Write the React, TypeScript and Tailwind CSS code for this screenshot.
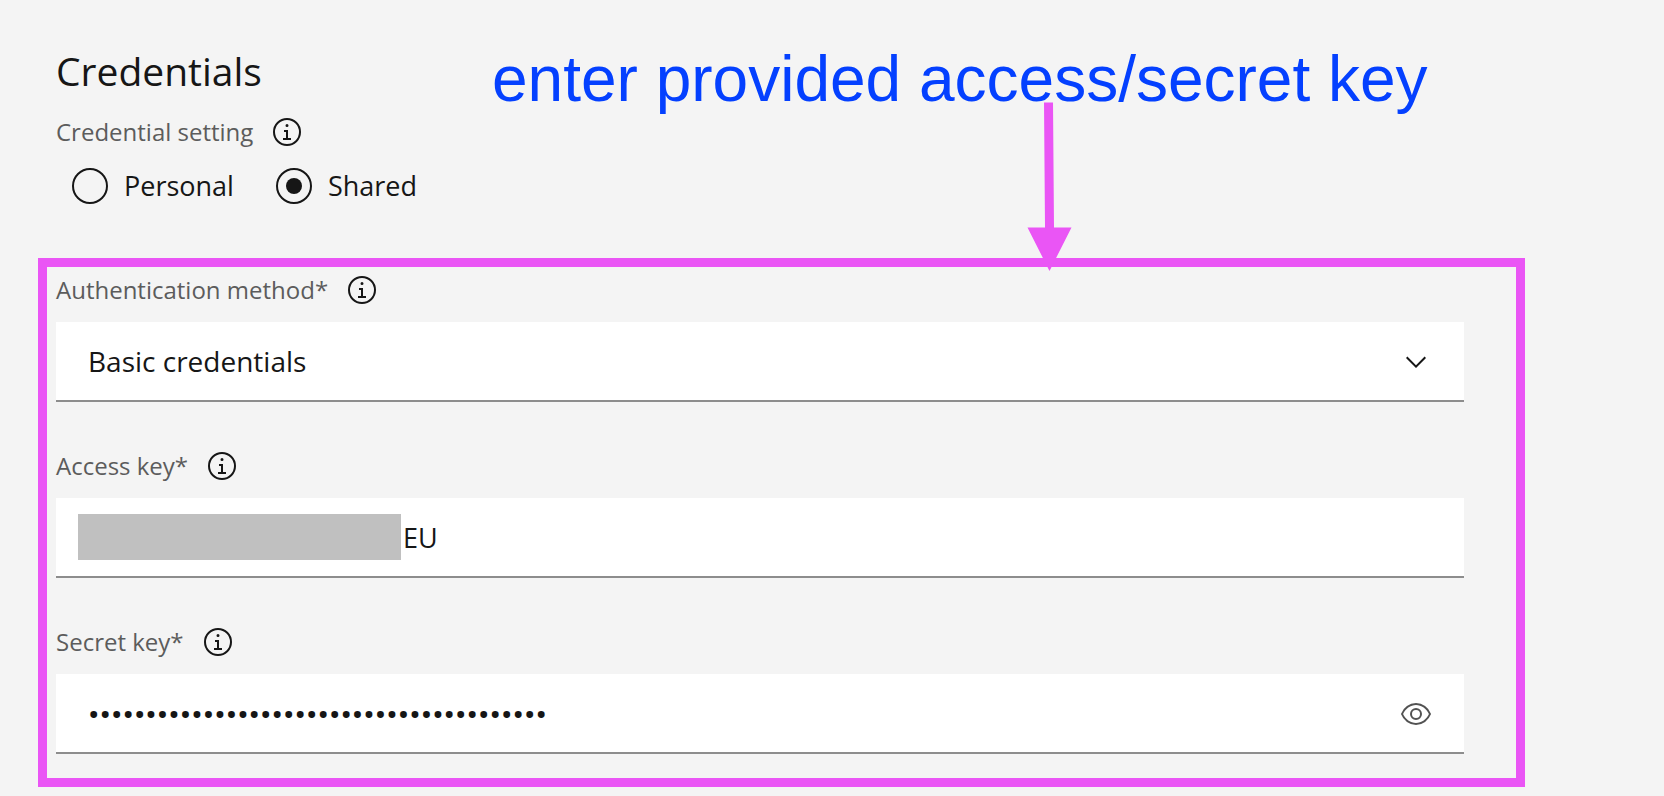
import React, { useState } from "react";

function InfoButton({ label }: { label: string }) {
  return (
    <button type="button" aria-label={label} className="size-8 shrink-0 text-[#161616]">
      <svg viewBox="0 0 32 32" className="size-8" fill="currentColor" aria-hidden="true">
        <path d="M17 22V14H13v2h2v6H12v2h8V22zM16 8a1.5 1.5 0 1 0 1.5 1.5A1.5 1.5 0 0 0 16 8z" />
        <path d="M16 30A14 14 0 1 1 30 16 14 14 0 0 1 16 30zM16 4A12 12 0 1 0 28 16 12 12 0 0 0 16 4z" />
      </svg>
    </button>
  );
}

function FieldLabel({ htmlFor, text }: { htmlFor: string; text: string }) {
  return (
    <div className="flex items-center gap-[18px]">
      <label htmlFor={htmlFor} className="text-[24px] leading-8 text-[#5c5c5c]">
        {text}
      </label>
      <InfoButton label={`About ${text.replace("*", "")}`} />
    </div>
  );
}

const fieldClass =
  "block h-20 w-full appearance-none rounded-none border-b-2 border-[#8d8d8d] bg-white text-[#161616] outline-none";

function RadioOption({ text, checked, onSelect }: { text: string; checked: boolean; onSelect: () => void }) {
  return (
    <label className="flex items-center gap-4 text-[27px] leading-9 text-[#161616]">
      <input
        type="radio"
        name="credential-setting"
        checked={checked}
        onChange={onSelect}
        className="grid size-9 appearance-none place-items-center rounded-full border-2 border-[#161616] before:size-4 before:rounded-full checked:before:bg-[#161616]"
      />
      {text}
    </label>
  );
}

export default function App() {
  const [setting, setSetting] = useState("Shared");
  const [accessKey, setAccessKey] = useState("EU");
  const [secretKey, setSecretKey] = useState("0123456789012345678901234567890123456789");
  const [visible, setVisible] = useState(false);

  return (
    <main className="relative min-h-screen bg-[#f4f4f4] pt-[47px] pb-[9px] font-['Open_Sans',sans-serif]">
      <section className="pl-14">
        <h1 className="text-[39px] leading-[48px] text-[#161616]">Credentials</h1>
        <div role="radiogroup" aria-labelledby="setting-label" className="mt-[21px]">
          <div className="flex items-center gap-[18px]">
            <span id="setting-label" className="text-[24px] leading-8 text-[#5c5c5c]">
              Credential setting
            </span>
            <InfoButton label="About credential setting" />
          </div>
          <div className="mt-5 flex gap-[42px] pl-4">
            {["Personal", "Shared"].map((s) => (
              <RadioOption key={s} text={s} checked={setting === s} onSelect={() => setSetting(s)} />
            ))}
          </div>
        </div>
      </section>

      <section className="mt-[54px] mr-[139px] ml-[38px] flex flex-col gap-12 border-[9px] border-[#ea55f5] pt-[7px] pr-[52px] pb-6 pl-[9px]">
        <div className="flex flex-col gap-4">
          <FieldLabel htmlFor="auth-method" text="Authentication method*" />
          <div className="relative">
            <select id="auth-method" className={`${fieldClass} px-8 text-[28px]`}>
              <option>Basic credentials</option>
            </select>
            <svg
              viewBox="0 0 16 16"
              className="pointer-events-none absolute top-6 right-8 size-8 text-[#161616]"
              fill="currentColor"
              aria-hidden="true"
            >
              <path d="M8 11L3 6 3.7 5.3 8 9.6 12.3 5.3 13 6z" />
            </svg>
          </div>
        </div>

        <div className="flex flex-col gap-4">
          <FieldLabel htmlFor="access-key" text="Access key*" />
          <div className="relative">
            <input
              id="access-key"
              type="text"
              value={accessKey}
              onChange={(e) => setAccessKey(e.target.value)}
              className={`${fieldClass} pr-8 pl-[347px] text-[27px]`}
            />
            <div className="absolute top-4 left-[22px] h-[46px] w-[323px] bg-[#c0c0c0]" />
          </div>
        </div>

        <div className="flex flex-col gap-4">
          <FieldLabel htmlFor="secret-key" text="Secret key*" />
          <div className="relative">
            <input
              id="secret-key"
              type={visible ? "text" : "password"}
              value={secretKey}
              onChange={(e) => setSecretKey(e.target.value)}
              className={`${fieldClass} pt-1 pr-20 pl-8 font-['Roboto',sans-serif] text-[34px]`}
            />
            <button
              type="button"
              aria-label="Show secret key"
              onClick={() => setVisible(!visible)}
              className="absolute top-6 right-8 size-8 text-[#525252]"
            >
              <svg viewBox="0 0 32 32" className="size-8" fill="currentColor" aria-hidden="true">
                <path d="M30.94 15.66A16.69 16.69 0 0 0 16 5 16.69 16.69 0 0 0 1.06 15.66a1 1 0 0 0 0 .68A16.69 16.69 0 0 0 16 27 16.69 16.69 0 0 0 30.94 16.34a1 1 0 0 0 0-.68zM16 25c-5.3 0-10.9-3.93-12.93-9C5.1 10.93 10.7 7 16 7s10.9 3.93 12.93 9C26.9 21.07 21.3 25 16 25z" />
                <path d="M16 10a6 6 0 1 0 6 6 6 6 0 0 0-6-6zm0 10a4 4 0 1 1 4-4 4 4 0 0 1-4 4z" />
              </svg>
            </button>
          </div>
        </div>
      </section>

      <div className="pointer-events-none absolute top-[43px] left-[492px] font-['Liberation_Sans',Arial,sans-serif]">
        <p className="text-[64px] leading-[72px] whitespace-nowrap text-[#0440ff]">
          enter provided access/secret key
        </p>
        <svg viewBox="0 0 46 170" className="absolute top-[59px] left-[535px] h-[170px] w-[46px]" fill="#ea55f5" aria-hidden="true">
          <path d="M17 0.5H26L27 125.5H44.5L22.5 169 0.5 125.5H18z" />
        </svg>
      </div>
    </main>
  );
}
